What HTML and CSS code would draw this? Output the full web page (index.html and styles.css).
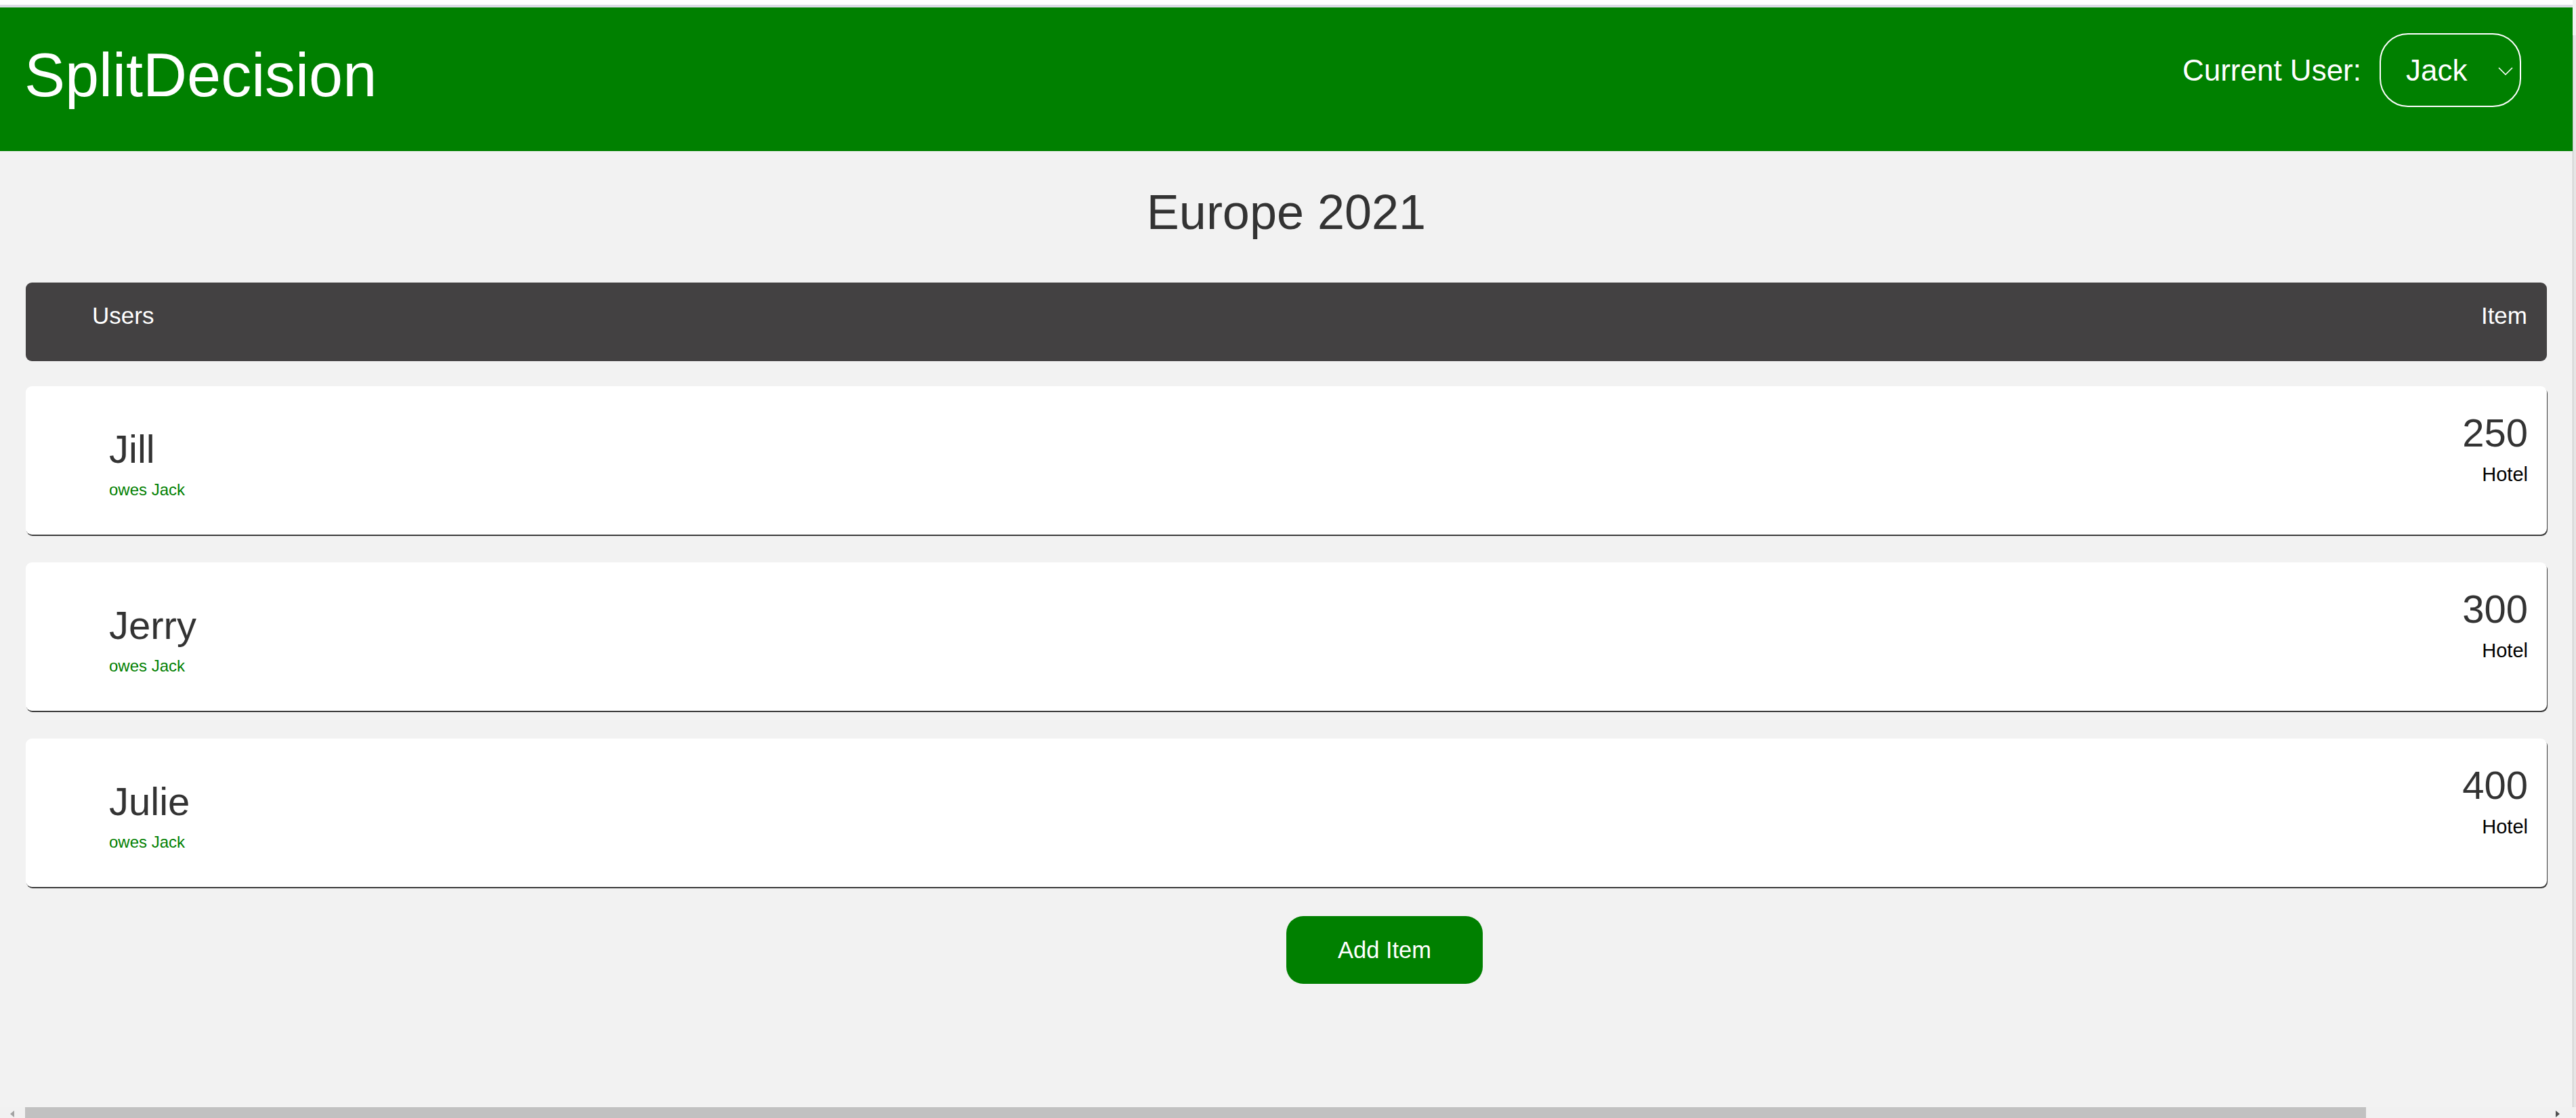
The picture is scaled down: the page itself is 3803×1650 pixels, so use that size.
FILE: index.html
```html
<!DOCTYPE html>
<html lang="en">
<head>
<meta charset="utf-8">
<title>SplitDecision</title>
<link rel="stylesheet" href="styles.css">
</head>
<body>
<div class="topbar"></div>
<header class="header">
  <div class="brand">SplitDecision</div>
  <div class="user">
    <span class="user-label">Current User:</span>
    <div class="user-select">
      <span class="user-name">Jack</span>
      <svg class="chev" width="22" height="12" viewBox="0 0 22 12"><polyline points="1,1 11,11 21,1" fill="none" stroke="#fff" stroke-width="1.6"/></svg>
    </div>
  </div>
</header>
<main class="main">
  <h1 class="title">Europe 2021</h1>
  <div class="list-head"><span>Users</span><span>Item</span></div>
  <div class="rows">
    <div class="row">
      <div class="who"><div class="name">Jill</div><div class="owes">owes Jack</div></div>
      <div class="amt"><div class="num">250</div><div class="item">Hotel</div></div>
    </div>
    <div class="row">
      <div class="who"><div class="name">Jerry</div><div class="owes">owes Jack</div></div>
      <div class="amt"><div class="num">300</div><div class="item">Hotel</div></div>
    </div>
    <div class="row">
      <div class="who"><div class="name">Julie</div><div class="owes">owes Jack</div></div>
      <div class="amt"><div class="num">400</div><div class="item">Hotel</div></div>
    </div>
  </div>
  <div class="actions"><button class="add">Add Item</button></div>
</main>
<div class="vscroll"></div>
<div class="hscroll">
  <span class="arrow-left"></span>
  <div class="thumb"></div>
  <span class="arrow-right"></span>
</div>
</body>
</html>
```

FILE: styles.css
```css
html, body {
  margin: 0;
  padding: 0;
}
body {
  background: #f2f2f2;
  font-family: "Liberation Sans", Arial, sans-serif;
  width: 3798px;
  height: 1650px;
  overflow: hidden;
}
.topbar {
  height: 7px;
  background: #ffffff;
  border-bottom: 4px solid #dcdce6;
}
.header {
  height: 212px;
  background: #008000;
  display: flex;
  justify-content: space-between;
  align-items: flex-start;
  padding: 0 76px 0 36px;
  box-sizing: border-box;
  color: #fff;
}
.brand {
  font-size: 90px;
  line-height: 104px;
  margin-top: 48px;
}
.user {
  display: flex;
  align-items: center;
  gap: 27px;
  margin-top: 38px;
}
.user-label {
  font-size: 44px;
  line-height: 50px;
}
.user-select {
  width: 209px;
  height: 109px;
  box-sizing: border-box;
  border: 2px solid #fff;
  border-radius: 42px;
  display: flex;
  align-items: center;
  padding: 0 10px 0 37px;
}
.user-name {
  font-size: 44px;
  line-height: 50px;
}
.chev {
  margin-left: auto;
  margin-top: 2px;
}
.main {
  padding: 0 38px;
}
.title {
  margin: 49px 0 0;
  font-size: 72px;
  line-height: 83px;
  font-weight: normal;
  text-align: center;
  color: #333;
}
.list-head {
  margin-top: 62px;
  height: 116px;
  box-sizing: border-box;
  background: #434142;
  border-radius: 9px;
  padding: 29px 29px 0 98px;
  display: flex;
  justify-content: space-between;
  align-items: flex-start;
  color: #fff;
  font-size: 35px;
  line-height: 40px;
}
.rows {
  margin-top: 37px;
  display: flex;
  flex-direction: column;
  gap: 41px;
}
.row {
  height: 219px;
  box-sizing: border-box;
  background: #fff;
  border-radius: 9px;
  box-shadow: 1px 2px 0 #3a3a3a;
  display: flex;
  justify-content: space-between;
  align-items: flex-start;
  padding: 35px 28px 0 123px;
}
.who {
  margin-top: 24px;
}
.name {
  font-size: 58px;
  line-height: 67px;
  color: #333;
}
.owes {
  margin-top: 13px;
  font-size: 24px;
  line-height: 28px;
  color: #008000;
}
.amt {
  text-align: right;
}
.num {
  font-size: 58px;
  line-height: 67px;
  color: #333;
}
.item {
  margin-top: 12px;
  font-size: 29px;
  line-height: 33px;
  color: #000;
}
.actions {
  margin-top: 43px;
  padding-left: 50%;
  display: flex;
}
.add {
  width: 290px;
  height: 100px;
  border: none;
  border-radius: 25px;
  background: #008000;
  color: #fff;
  font-family: "Liberation Sans", Arial, sans-serif;
  font-size: 34.5px;
  padding: 0;
}
.vscroll {
  position: fixed;
  top: 52px;
  right: 0;
  bottom: 16px;
  width: 4px;
  background: #e6e6e6;
  border-left: 1px solid #c4c4c4;
}
.hscroll {
  position: fixed;
  left: 0;
  right: 0;
  bottom: 0;
  height: 16px;
  background: #f1f1f1;
}
.thumb {
  position: absolute;
  left: 37px;
  top: 0;
  bottom: 0;
  width: 3456px;
  background: #c1c1c1;
}
.arrow-left {
  position: absolute;
  left: 15px;
  top: 5px;
  width: 0;
  height: 0;
  border-top: 5px solid transparent;
  border-bottom: 5px solid transparent;
  border-right: 6px solid #a3a3a3;
}
.arrow-right {
  position: absolute;
  left: 3773px;
  top: 5px;
  width: 0;
  height: 0;
  border-top: 5px solid transparent;
  border-bottom: 5px solid transparent;
  border-left: 6px solid #505050;
}
```
